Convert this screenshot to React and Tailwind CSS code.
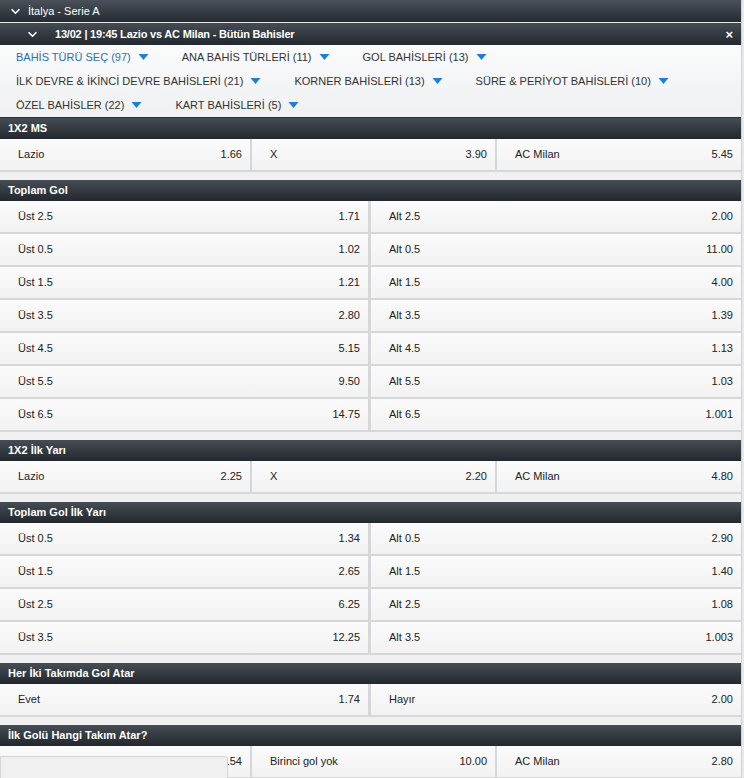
const font = { fontFamily: '"Liberation Sans", Arial, sans-serif' };

const filterRows = [
  [
    { label: "BAHİS TÜRÜ SEÇ (97)", active: true },
    { label: "ANA BAHİS TÜRLERİ (11)" },
    { label: "GOL BAHİSLERİ (13)" },
  ],
  [
    { label: "İLK DEVRE & İKİNCİ DEVRE BAHİSLERİ (21)" },
    { label: "KORNER BAHİSLERİ (13)" },
    { label: "SÜRE & PERİYOT BAHİSLERİ (10)" },
  ],
  [{ label: "ÖZEL BAHİSLER (22)" }, { label: "KART BAHİSLERİ (5)" }],
];

const markets = [
  {
    title: "1X2 MS",
    cols: 3,
    rows: [[["Lazio", "1.66"], ["X", "3.90"], ["AC Milan", "5.45"]]],
  },
  {
    title: "Toplam Gol",
    cols: 2,
    rows: [
      [["Üst 2.5", "1.71"], ["Alt 2.5", "2.00"]],
      [["Üst 0.5", "1.02"], ["Alt 0.5", "11.00"]],
      [["Üst 1.5", "1.21"], ["Alt 1.5", "4.00"]],
      [["Üst 3.5", "2.80"], ["Alt 3.5", "1.39"]],
      [["Üst 4.5", "5.15"], ["Alt 4.5", "1.13"]],
      [["Üst 5.5", "9.50"], ["Alt 5.5", "1.03"]],
      [["Üst 6.5", "14.75"], ["Alt 6.5", "1.001"]],
    ],
  },
  {
    title: "1X2 İlk Yarı",
    cols: 3,
    rows: [[["Lazio", "2.25"], ["X", "2.20"], ["AC Milan", "4.80"]]],
  },
  {
    title: "Toplam Gol İlk Yarı",
    cols: 2,
    rows: [
      [["Üst 0.5", "1.34"], ["Alt 0.5", "2.90"]],
      [["Üst 1.5", "2.65"], ["Alt 1.5", "1.40"]],
      [["Üst 2.5", "6.25"], ["Alt 2.5", "1.08"]],
      [["Üst 3.5", "12.25"], ["Alt 3.5", "1.003"]],
    ],
  },
  {
    title: "Her İki Takımda Gol Atar",
    cols: 2,
    rows: [[["Evet", "1.74"], ["Hayır", "2.00"]]],
  },
  {
    title: "İlk Golü Hangi Takım Atar?",
    cols: 3,
    rows: [[["Lazio", "3.54"], ["Birinci gol yok", "10.00"], ["AC Milan", "2.80"]]],
    overlay: true,
  },
];

function Chevron({ className }) {
  return (
    <svg viewBox="0 0 12 8" className={className} fill="none" stroke="white" strokeWidth="1.8">
      <path d="M1.5 1.5 L6 6 L10.5 1.5" />
    </svg>
  );
}

function Caret() {
  return (
    <svg viewBox="0 0 10 6" className="w-[11px] h-[6px] ml-[7px]">
      <path d="M0 0 H10 L5 6 Z" fill="#1d7fd5" />
    </svg>
  );
}

function Cell({ label, odd }) {
  return (
    <div className="flex items-center justify-between pl-[18px] pr-2 bg-linear-to-b from-[#fbfbfb] to-[#f2f2f2] text-[#222]">
      <span>{label}</span>
      <span>{odd}</span>
    </div>
  );
}

function Market({ market }) {
  const grid = market.cols === 3 ? "grid-cols-[250px_243px_1fr]" : "grid-cols-[368px_1fr]";
  const gap = market.cols === 3 ? "gap-x-[2px]" : "gap-x-[3px]";
  return (
    <div className="mb-2">
      <div className="h-[21px] flex items-center pl-2 bg-linear-to-b from-[#464d54] to-[#22282e] text-white font-bold">
        {market.title}
      </div>
      {market.rows.map((row, i) => (
        <div key={i} className={`relative grid ${grid} ${gap} h-[33px] pb-[2px] bg-[#d4d8db]`}>
          {row.map(([label, odd], j) => (
            <Cell key={j} label={label} odd={odd} />
          ))}
          {/* half-open dropdown covering the first cell */}
          {market.overlay && (
            <div className="absolute left-0 top-[10px] w-[228px] h-[30px] bg-[#f0f0f0] border border-[#d6d6d6] rounded-tr-[3px]" />
          )}
        </div>
      ))}
    </div>
  );
}

export default function App() {
  return (
    <div className="w-[744px] h-[778px] overflow-hidden flex items-start bg-[#f0f0f0] text-[11px]" style={font}>
      <div className="w-[741px] shrink-0">
        {/* league bar */}
        <div className="h-[22px] flex items-center bg-linear-to-b from-[#4a5158] to-[#252b31] text-white">
          <Chevron className="w-[11px] h-[7px] ml-[10px] mr-[7px]" />
          <span>İtalya - Serie A</span>
        </div>
        <div className="h-px bg-[#e8eaec]" />
        {/* match bar */}
        <div className="h-[22px] flex items-center bg-linear-to-b from-[#454c53] to-[#23292f] text-white">
          <Chevron className="w-[11px] h-[7px] ml-[27px] mr-[17px]" />
          <span className="font-bold tracking-[-0.2px]">13/02 | 19:45 Lazio vs AC Milan - Bütün Bahisler</span>
          <span className="ml-auto mr-[8px] font-bold text-[13px] leading-none">×</span>
        </div>
        {/* filters */}
        <div className="pl-4 bg-linear-to-b from-[#fbfbfc] to-[#eef0f2] border-b border-[#2a3036]">
          {filterRows.map((row, i) => (
            <div key={i} className="h-6 flex items-center gap-x-[33px]">
              {row.map((f) => (
                <div key={f.label} className="flex items-center">
                  <span className={f.active ? "text-[#2b6cb8]" : "text-[#333]"}>{f.label}</span>
                  <Caret />
                </div>
              ))}
            </div>
          ))}
        </div>
        {markets.map((m) => (
          <Market key={m.title} market={m} />
        ))}
      </div>
      <div className="w-[3px] h-full bg-[#e6e8ea] border-l border-[#d0d4d8]" />
    </div>
  );
}
